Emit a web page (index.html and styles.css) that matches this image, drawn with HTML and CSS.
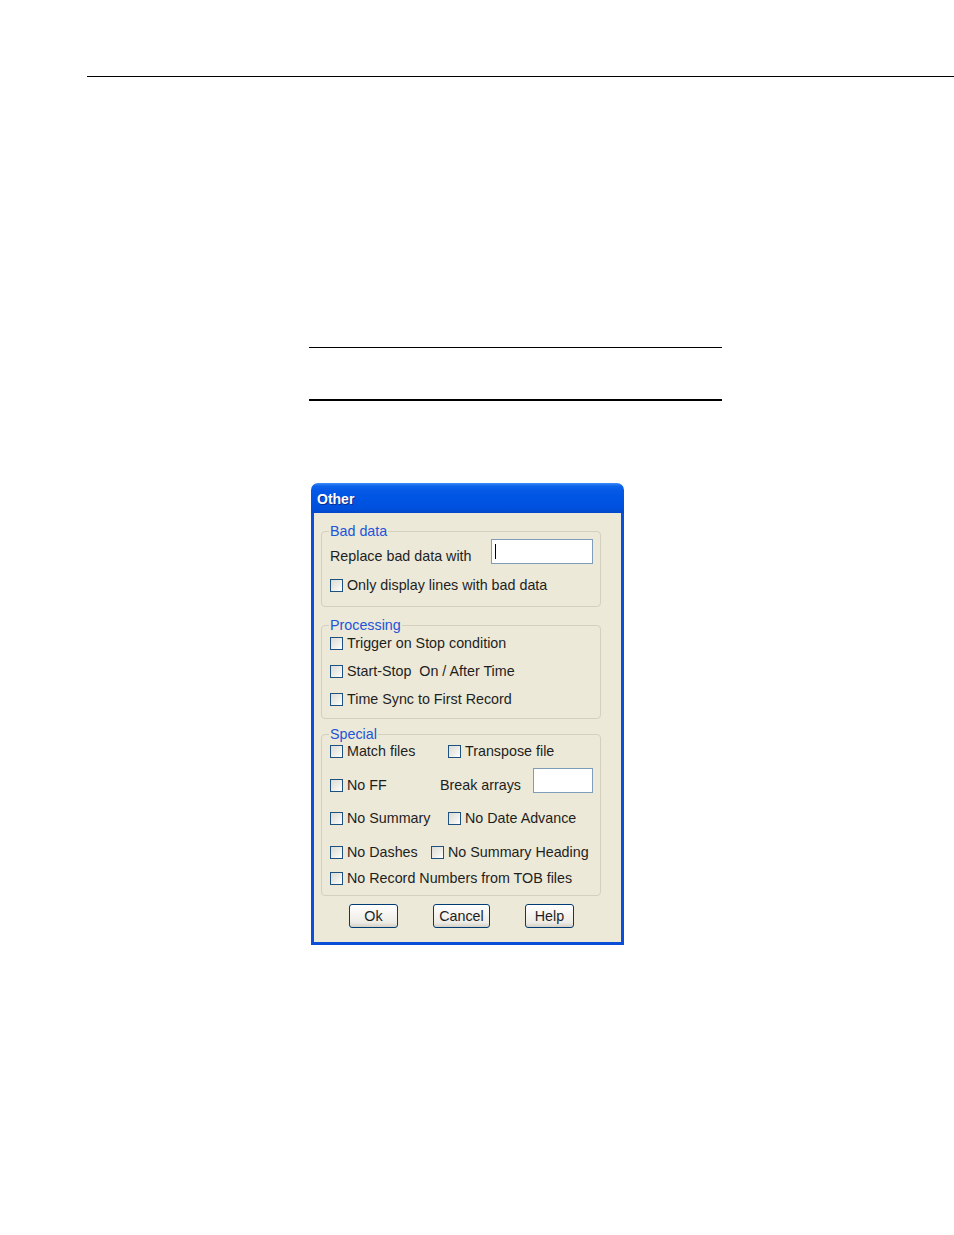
FILE: index.html
```html
<!DOCTYPE html>
<html>
<head>
<meta charset="utf-8">
<link rel="stylesheet" href="styles.css">
</head>
<body>
<div class="page">
  <div class="header-rule"></div>
  <div class="table-rules"></div>
  <div class="dialog">
    <div class="titlebar"><span class="title">Other</span></div>
    <div class="dlg-body">
      <fieldset class="group g-bad">
        <legend>Bad data</legend>
        <div class="row row-input">
          <span class="label">Replace bad data with</span>
          <span class="textbox tb-wide"><span class="caret"></span></span>
        </div>
        <div class="row mt13"><label class="chk"><span class="box"></span>Only display lines with bad data</label></div>
      </fieldset>

      <fieldset class="group g-proc">
        <legend>Processing</legend>
        <div class="row mt2"><label class="chk"><span class="box"></span>Trigger on Stop condition</label></div>
        <div class="row mt12"><label class="chk"><span class="box"></span>Start-Stop&nbsp; On / After Time</label></div>
        <div class="row mt12"><label class="chk"><span class="box"></span>Time Sync to First Record</label></div>
      </fieldset>

      <fieldset class="group g-spec">
        <legend>Special</legend>
        <div class="row mt1">
          <label class="chk c118"><span class="box"></span>Match files</label>
          <label class="chk"><span class="box"></span>Transpose file</label>
        </div>
        <div class="row row-input mt9">
          <label class="chk c110"><span class="box"></span>No FF</label>
          <span class="label">Break arrays</span>
          <span class="textbox tb-small"></span>
        </div>
        <div class="row mt17">
          <label class="chk c118"><span class="box"></span>No Summary</label>
          <label class="chk"><span class="box"></span>No Date Advance</label>
        </div>
        <div class="row mt18">
          <label class="chk c101"><span class="box"></span>No Dashes</label>
          <label class="chk"><span class="box"></span>No Summary Heading</label>
        </div>
        <div class="row mt10"><label class="chk"><span class="box"></span>No Record Numbers from TOB files</label></div>
      </fieldset>

      <div class="buttons">
        <span class="btn b-ok">Ok</span>
        <span class="btn b-cancel">Cancel</span>
        <span class="btn b-help">Help</span>
      </div>
    </div>
  </div>
</div>
</body>
</html>
```
FILE: styles.css
```css
html, body {
  margin: 0;
  padding: 0;
  background: #ffffff;
}
.page {
  width: 954px;
  height: 1235px;
  overflow: hidden;
  font-family: "Liberation Sans", Arial, sans-serif;
}
.header-rule {
  margin: 76px 0 0 87px;
  height: 1px;
  background: #000;
}
.table-rules {
  margin: 270px 0 0 309px;
  width: 413px;
  height: 51px;
  border-top: 1px solid #000;
  border-bottom: 2px solid #000;
}
.dialog {
  margin: 82px 0 0 311px;
  width: 313px;
}
.titlebar {
  height: 30px;
  border-radius: 7px 7px 0 0;
  background: linear-gradient(#3d8ef8 0px, #0d64ea 3px, #0558e6 8px, #0054e3 16px, #0050dc 26px, #0346c8 30px);
  display: flex;
  align-items: center;
  padding-left: 6px;
  box-sizing: border-box;
}
.title {
  color: #fff;
  font-weight: bold;
  font-size: 14px;
  text-shadow: 1px 1px 0 #0a2a8a;
  margin-top: 2px;
}
.dlg-body {
  background: #ece9d8;
  border: 3px solid #0b4fd9;
  border-top: none;
  padding: 10px 20px 14px 7px;
  color: #1e1e1e;
  font-size: 14.3px;
}
.group {
  margin: 0;
  border: 1px solid #d3d0c0;
  border-radius: 4px;
  padding: 0 7px 0 8px;
  min-width: 0;
}
.group legend {
  padding: 0 1px;
  margin-left: -1px;
  color: #2354d8;
  line-height: 16px;
  font-size: 14.3px;
}
.g-bad { padding-bottom: 13px; }
.g-proc { margin-top: 10px; padding-bottom: 11px; }
.g-spec { margin-top: 7px; padding-bottom: 9px; }
.row {
  display: flex;
  align-items: center;
  line-height: 16px;
  height: 16px;
}
.row-input {
  height: 25px;
  align-items: flex-end;
}
.row-input .textbox { align-self: flex-start; }
.g-bad .row-input { justify-content: space-between; }
.mt1 { margin-top: 1px; }
.mt2 { margin-top: 2px; }
.mt9 { margin-top: 9px; }
.mt10 { margin-top: 10px; }
.mt12 { margin-top: 12px; }
.mt13 { margin-top: 13px; }
.mt17 { margin-top: 17px; }
.mt18 { margin-top: 18px; }
.label { white-space: nowrap; }
.chk {
  display: flex;
  align-items: center;
  white-space: nowrap;
}
.c118 { width: 118px; }
.c110 { width: 110px; }
.c101 { width: 101px; }
.box {
  width: 11px;
  height: 11px;
  border: 1px solid #1c5180;
  background: linear-gradient(135deg, #dcdcd5 0%, #eeede8 55%, #ffffff 100%);
  margin-right: 4px;
  flex: none;
}
.textbox {
  display: block;
  height: 23px;
  border: 1px solid #7f9db9;
  background: #fff;
  box-sizing: content-box;
  position: relative;
}
.tb-wide { width: 100px; }
.tb-small { width: 58px; margin-left: 12px; }
.caret {
  position: absolute;
  left: 3px;
  top: 4px;
  width: 1px;
  height: 15px;
  background: #000;
}
.buttons {
  display: flex;
  justify-content: center;
  gap: 35px;
  margin-top: 8px;
  padding-left: 1px;
}
.btn {
  height: 22px;
  border: 1px solid #003c74;
  border-radius: 3px;
  background: linear-gradient(#ffffff 0%, #f6f5f1 40%, #ecebe5 80%, #d6d0c5 100%);
  display: flex;
  align-items: center;
  justify-content: center;
  font-size: 14.3px;
  color: #1e1e1e;
  box-sizing: content-box;
}
.b-ok, .b-help { width: 47px; }
.b-cancel { width: 55px; }
```
